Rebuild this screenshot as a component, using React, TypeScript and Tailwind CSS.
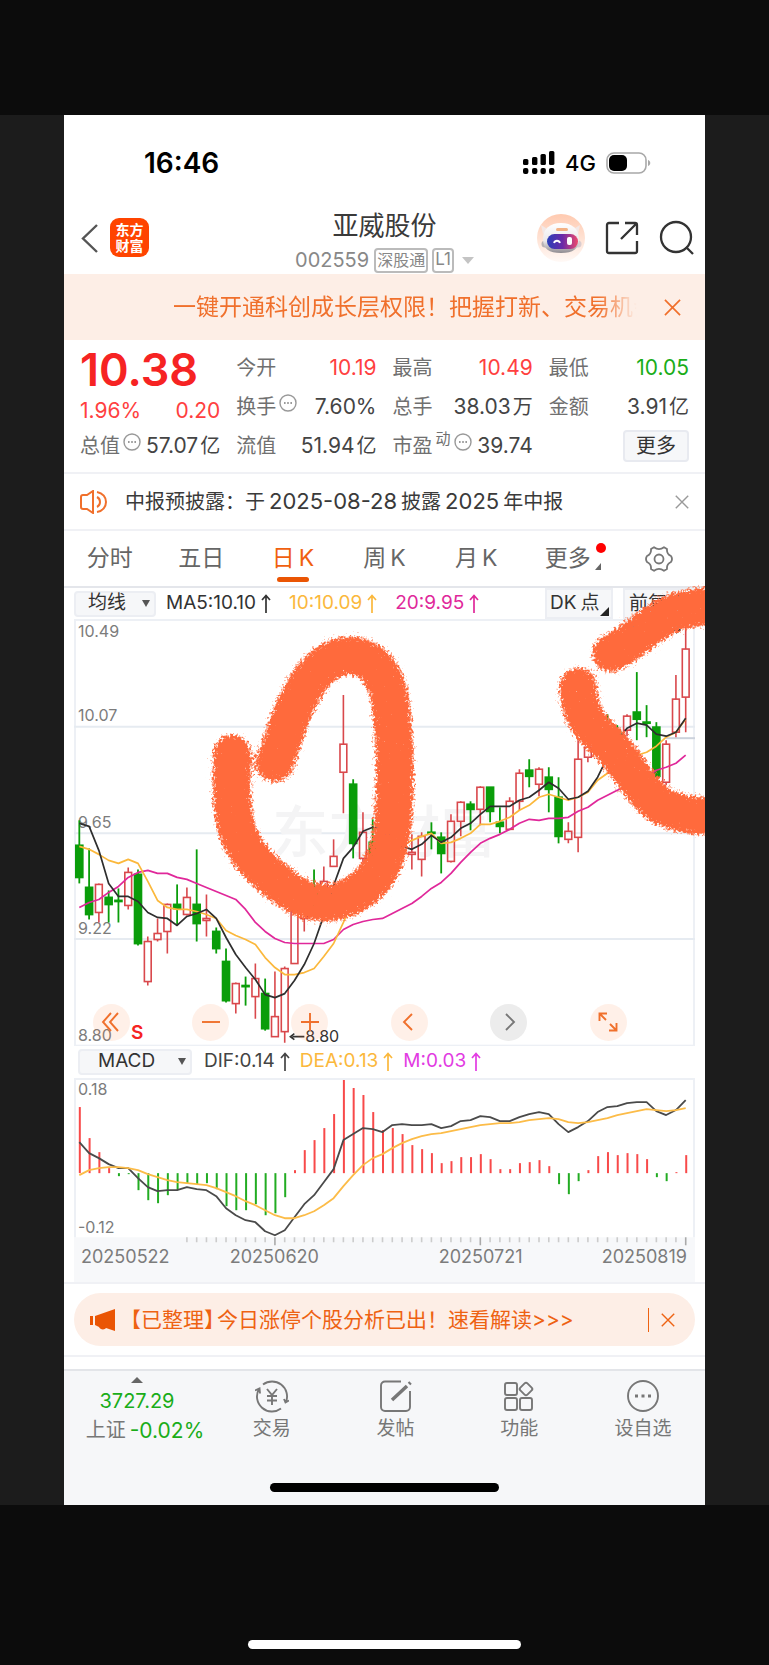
import type { ReactNode } from 'react'

type Kind = 'up' | 'down'
// [kind, high, body top, body bottom, low]
type Candle = [Kind, number, number, number, number]

const candles: Candle[] = [
  ['down', 820, 845, 877, 883], ['down', 848, 887, 914, 919], ['up', 883, 884, 912, 922],
  ['down', 890, 897, 904, 922], ['down', 888, 900, 901, 922], ['up', 867, 872, 905, 909],
  ['down', 869, 874, 943, 945], ['up', 936, 941, 981, 985], ['up', 918, 933, 939, 941],
  ['up', 903, 904, 931, 953], ['down', 884, 904, 908, 924], ['up', 887, 897, 914, 915],
  ['down', 849, 904, 923, 941], ['up', 894, 918, 920, 936], ['down', 927, 931, 948, 953],
  ['down', 948, 961, 1000, 1002], ['up', 982, 983, 1003, 1013], ['down', 976, 985, 986, 1005],
  ['up', 963, 978, 996, 1018], ['down', 978, 993, 1028, 1030], ['up', 971, 1016, 1036, 1036],
  ['up', 966, 968, 1031, 1042], ['up', 900, 910, 963, 963], ['up', 882, 900, 918, 931],
  ['down', 869, 886, 905, 912], ['up', 866, 881, 905, 910], ['up', 839, 856, 866, 866],
  ['up', 695, 744, 772, 813], ['down', 779, 784, 843, 858], ['up', 812, 832, 858, 862],
  ['down', 819, 842, 856, 866], ['up', 815, 825, 845, 850], ['up', 820, 830, 850, 855],
  ['down', 835, 845, 846, 848], ['up', 834, 852, 854, 869], ['up', 832, 836, 859, 876],
  ['down', 822, 832, 833, 849], ['down', 832, 837, 853, 873], ['up', 814, 821, 861, 862],
  ['up', 801, 802, 821, 836], ['down', 801, 804, 809, 830], ['up', 786, 787, 809, 825],
  ['down', 787, 787, 811, 822], ['down', 807, 822, 826, 833], ['up', 797, 801, 829, 830],
  ['up', 769, 773, 801, 810], ['down', 759, 770, 776, 787], ['up', 767, 769, 784, 796],
  ['down', 767, 777, 789, 812], ['down', 777, 797, 836, 843], ['up', 822, 831, 839, 843],
  ['up', 740, 759, 837, 852], ['up', 738, 747, 757, 762], ['down', 725, 735, 750, 755],
  ['down', 714, 730, 740, 745], ['down', 725, 732, 738, 742], ['up', 714, 716, 730, 736],
  ['down', 672, 712, 719, 740], ['down', 705, 722, 723, 737], ['down', 722, 727, 776, 777],
  ['up', 740, 744, 782, 785], ['up', 675, 699, 732, 737], ['up', 622, 649, 697, 732],
]

const ma5 = [
  823, 826, 850, 883, 896, 896, 901, 912, 917, 918, 925, 916, 913, 909, 918, 937, 954, 967, 979, 994, 997,
  993, 980, 964, 943, 915, 885, 858, 847, 831, 827, 829, 838, 846, 849, 844, 835, 842, 837, 828, 823, 814,
  806, 806, 806, 800, 797, 790, 782, 788, 799, 797, 791, 777, 757, 740, 728, 723, 725, 734, 736, 732, 718,
]
const ma10 = [
  846, 849, 854, 860, 863, 859, 863, 881, 900, 907, 909, 909, 911, 914, 918, 930, 935, 939, 944, 957, 967,
  974, 974, 972, 968, 956, 943, 922, 900, 880, 862, 851, 847, 846, 840, 836, 833, 843, 842, 838, 833, 824,
  824, 821, 817, 810, 805, 797, 794, 797, 800, 797, 792, 780, 773, 765, 758, 755, 752, 746, 737, 732, 719,
]
const ma20 = [
  907, 902, 899, 892, 886, 877, 872, 870, 873, 873, 877, 879, 883, 887, 891, 895, 899, 909, 922, 931, 938,
  942, 943, 943, 943, 943, 939, 929, 924, 921, 919, 918, 913, 908, 903, 896, 888, 882, 873, 862, 852, 843,
  838, 834, 829, 823, 819, 820, 818, 818, 817, 811, 807, 800, 795, 790, 786, 782, 777, 770, 767, 763, 755,
]
const bars = [
  1106, 1137, 1151, 1167, 1175, 1173, 1189, 1199, 1202, 1194, 1189, 1182, 1183, 1182, 1188, 1205, 1209, 1209,
  1203, 1214, 1212, 1196, 1169, 1149, 1139, 1127, 1113, 1079, 1087, 1094, 1111, 1129, 1127, 1133, 1144, 1148,
  1152, 1162, 1160, 1156, 1156, 1153, 1158, 1168, 1168, 1162, 1161, 1159, 1165, 1183, 1193, 1180, 1169, 1155,
  1151, 1154, 1152, 1153, 1158, 1176, 1180, 1171, 1154,
]
const dif = [
  1141, 1152, 1157, 1163, 1167, 1167, 1177, 1186, 1190, 1189, 1189, 1186, 1188, 1189, 1195, 1207, 1214, 1219,
  1221, 1230, 1234, 1229, 1216, 1203, 1194, 1181, 1168, 1139, 1133, 1127, 1128, 1131, 1124, 1123, 1124, 1124,
  1123, 1127, 1125, 1120, 1119, 1115, 1116, 1120, 1120, 1116, 1113, 1111, 1113, 1123, 1131, 1126, 1120, 1111,
  1106, 1105, 1102, 1101, 1101, 1110, 1114, 1109, 1099,
]
const dea = [
  1174, 1169, 1167, 1166, 1166, 1167, 1169, 1173, 1176, 1179, 1181, 1182, 1183, 1184, 1187, 1191, 1195, 1200,
  1204, 1209, 1214, 1217, 1217, 1214, 1210, 1204, 1197, 1185, 1174, 1164, 1157, 1153, 1147, 1142, 1138, 1135,
  1133, 1132, 1130, 1128, 1126, 1124, 1123, 1122, 1122, 1121, 1119, 1118, 1117, 1118, 1121, 1122, 1121, 1119,
  1117, 1114, 1112, 1110, 1108, 1109, 1110, 1109, 1107,
]

const ZERO = 1172
const xAt = (i: number) => 79.3 + i * 9.765
const line = (ys: number[]) => ys.map((y, i) => `${xAt(i).toFixed(1)},${y}`).join(' ')

function Dots() {
  return (
    <svg viewBox="0 0 18 18" className="mb-2 size-[18px] shrink-0" fill="none" stroke="#999" strokeWidth="1.4">
      <circle cx="9" cy="9" r="8" />
      <path d="M5 9h1.6M8.2 9h1.6M11.4 9H13" strokeWidth="1.8" />
    </svg>
  )
}

function Cross({ className }: { className: string }) {
  return (
    <svg viewBox="0 0 18 18" className={className} fill="none" stroke="currentColor" strokeWidth="1.8">
      <path d="M1 1l16 16M17 1L1 17" />
    </svg>
  )
}

function Row({ label, value, unit, extra, tone }: { label: string; value: string; unit?: string; extra?: ReactNode; tone?: string }) {
  return (
    <div className="flex h-[39px] items-center justify-between whitespace-nowrap">
      <span className="flex items-center gap-[3px] text-[#707070]">
        {label}
        {extra}
      </span>
      <span className={`flex items-center gap-[2px] ${tone ?? 'text-[#444]'}`}>
        <span className="text-[21px]">{value}</span>
        {unit && <span>{unit}</span>}
      </span>
    </div>
  )
}

function StatusBar() {
  return (
    <div className="flex h-24 items-center justify-between pr-[54px] pl-20 text-black">
      <span className="text-[28px] font-semibold">16:46</span>
      <div className="flex items-center gap-[10px]">
        <svg viewBox="0 0 33 24" className="h-6 w-[33px]">
          <g fill="#000">
            <rect x="1" y="8" width="5.400" height="6" rx="1.500" />
            <rect x="10" y="6" width="5.400" height="8" rx="1.500" />
            <rect x="18.500" y="3" width="5.400" height="11" rx="1.500" />
            <rect x="27" y="0" width="5.400" height="14" rx="1.500" />
            <rect x="1" y="17" width="5.400" height="6" rx="2" />
            <rect x="10" y="17" width="5.400" height="6" rx="2" />
            <rect x="18.500" y="17" width="5.400" height="6" rx="2" />
            <rect x="27" y="17" width="5.400" height="6" rx="2" />
          </g>
        </svg>
        <span className="text-[22px] font-medium">4G</span>
        <svg viewBox="0 0 45 22" className="h-[22px] w-[45px]">
          <rect x="1" y="1" width="39" height="20" rx="7" fill="none" stroke="#a8a8a8" strokeWidth="1.6" />
          <rect x="3" y="3" width="18" height="16" rx="5" fill="#000" />
          <path d="M42 8c3 1 3 5 0 6z" fill="#a8a8a8" />
        </svg>
      </div>
    </div>
  )
}

function Robot() {
  return (
    <svg viewBox="0 0 48 48" className="size-12">
      <defs>
        <linearGradient id="halo" x2="0" y2="1">
          <stop offset="0" stopColor="#ffcab0" />
          <stop offset="1" stopColor="#fff9f6" />
        </linearGradient>
        <linearGradient id="visor">
          <stop offset="0" stopColor="#2b3fb8" />
          <stop offset=".5" stopColor="#6a2aa8" />
          <stop offset="1" stopColor="#ee4a6c" />
        </linearGradient>
        <linearGradient id="shell" x2="0" y2="1">
          <stop offset="0" stopColor="#ffffff" />
          <stop offset=".6" stopColor="#ebe8ea" />
          <stop offset="1" stopColor="#8f8b90" />
        </linearGradient>
      </defs>
      <circle cx="24" cy="24" r="24" fill="url(#halo)" />
      <path d="M4 11l8 5-6 4zM43 11l-8 5 6 4z" fill="#f3e8e6" />
      <circle cx="8" cy="30" r="3.500" fill="#b9b2b4" />
      <circle cx="41" cy="30" r="3.500" fill="#d9cdd0" />
      <path d="M24 9c11 0 18 6 18 16S36 39 24 39 6 35 6 25 13 9 24 9z" fill="url(#shell)" />
      <rect x="19" y="14" width="12" height="3" rx="1.5" fill="#f3b184" />
      <rect x="10" y="20" width="31" height="15" rx="7.5" fill="url(#visor)" />
      <path d="M17 29c1-3 5-3 6 0" fill="none" stroke="#fff" strokeWidth="1.8" />
      <rect x="30" y="23" width="5" height="8" rx="2" fill="#fff" />
    </svg>
  )
}

function Header() {
  return (
    <header className="grid h-[63px] grid-cols-[1fr_auto_1fr] items-start">
      <div className="flex items-center gap-3 pt-[7px] pl-4">
        <button aria-label="返回">
          <svg viewBox="0 0 18 30" className="h-[30px] w-[18px]" fill="none" stroke="#555" strokeWidth="2.4">
            <path d="M17 2L3 15.500 17 29" />
          </svg>
        </button>
        <div className="flex size-[39px] flex-col items-center justify-center rounded-[9px] bg-[#ff4400] text-[14px] leading-4 font-bold text-white">
          <span>东方</span>
          <span>财富</span>
        </div>
      </div>
      <div className="flex flex-col items-center">
        <h1 className="text-[26px] leading-[30px] text-[#3a3a3a]">亚威股份</h1>
        <div className="mt-1 flex items-center gap-1 text-[#888]">
          <span className="pr-px text-[20px]">002559</span>
          <span className="flex h-[25px] items-center rounded border-2 border-[#bbb] px-px text-[16px]">深股通</span>
          <span className="flex h-[25px] items-center rounded border-2 border-[#bbb] px-px text-[17px]">L1</span>
          <svg viewBox="0 0 12 7" className="ml-1 h-[7px] w-3" fill="#c4c4c4">
            <path d="M0 0h12L6 7z" />
          </svg>
        </div>
      </div>
      <div className="flex items-center justify-end gap-5 pt-[3px] pr-[10px]">
        <button aria-label="智能助手"><Robot /></button>
        <button aria-label="分享">
          <svg viewBox="0 0 34 34" className="size-[34px]" fill="none" stroke="#333" strokeWidth="2.3">
            <path d="M14 2H4a2 2 0 0 0-2 2v26a2 2 0 0 0 2 2h26a2 2 0 0 0 2-2V20M20 2h10a2 2 0 0 1 2 2v10M31 3L16 18" />
          </svg>
        </button>
        <button aria-label="搜索">
          <svg viewBox="0 0 36 36" className="size-9" fill="none" stroke="#333" strokeWidth="2.3">
            <circle cx="17" cy="17" r="15" />
            <path d="M27 27l7 7" />
          </svg>
        </button>
      </div>
    </header>
  )
}

function Quote() {
  return (
    <section className="grid grid-cols-4 gap-x-4 border-b-2 border-[#f0f1f5] px-4 pt-2 pb-[7px] text-[20px]">
      <div>
        <div className="flex h-11 items-center text-[45px] font-semibold text-[#f62323]">10.38</div>
        <div className="flex h-[34px] items-end justify-between text-[21px] text-[#ff4040]">
          <span>1.96%</span>
          <span>0.20</span>
        </div>
        <Row label="总值" extra={<Dots />} value="57.07" unit="亿" />
      </div>
      <div>
        <Row label="今开" tone="text-[#ff4040]" value="10.19" />
        <Row label="换手" extra={<Dots />} value="7.60%" />
        <Row label="流值" value="51.94" unit="亿" />
      </div>
      <div>
        <Row label="最高" tone="text-[#ff4040]" value="10.49" />
        <Row label="总手" value="38.03" unit="万" />
        <Row label="市盈" extra={<><span className="mb-3 text-[15px]">动</span><Dots /></>} value="39.74" />
      </div>
      <div>
        <Row label="最低" tone="text-[#1aad19]" value="10.05" />
        <Row label="金额" value="3.91" unit="亿" />
        <div className="flex h-[39px] items-center justify-end">
          <button className="h-8 w-[66px] rounded border-2 border-[#e8eaf0] bg-[#f6f7f9] leading-7 text-[#333]">更多</button>
        </div>
      </div>
    </section>
  )
}

function Notice() {
  return (
    <section className="flex h-[57px] items-center border-b-2 border-[#f0f1f5] px-4 text-[20px] text-[#3a3a3a]">
      <svg viewBox="0 0 28 24" className="mr-[17px] h-6 w-7 shrink-0" fill="none" stroke="#f0702c" strokeWidth="2">
        <path d="M3 5h4l6-4v22l-6-4H3a2 2 0 0 1-2-2V7a2 2 0 0 1 2-2zM17 7c4 2 4 8 0 10M17 2c12 2 12 18 0 20" />
      </svg>
      <p className="flex flex-1 items-center gap-1 whitespace-nowrap">
        <span>中报预披露：于</span>
        <span className="text-[22px]">2025-08-28</span>
        <span>披露</span>
        <span className="text-[22px]">2025</span>
        <span>年中报</span>
      </p>
      <button aria-label="关闭公告" className="text-[#999]"><Cross className="size-[14px]" /></button>
    </section>
  )
}

function Tabs() {
  const tab = 'flex h-full flex-1 items-center justify-center gap-1'
  return (
    <nav className="flex h-[57px] border-b-2 border-[#e4e6eb] text-[23px] text-[#666]">
      <button className={tab}>分时</button>
      <button className={tab}>五日</button>
      <button className="relative flex h-full flex-1 items-center justify-center gap-1 text-[#f0600f]">
        <span>日</span>
        <span>K</span>
        <span className="absolute bottom-1 h-[5px] w-8 rounded-full bg-[#ea5504]" />
      </button>
      <button className={tab}><span>周</span><span>K</span></button>
      <button className={tab}><span>月</span><span>K</span></button>
      <button className={tab}>
        <span className="relative">
          更多
          <svg viewBox="0 0 12 34" className="absolute top-0 left-full ml-1 h-[34px] w-3">
            <circle cx="6" cy="7" r="5" fill="#f00" />
            <path d="M6 22v7H0z" fill="#666" />
          </svg>
        </span>
      </button>
      <button aria-label="设置" className={tab}>
        <svg viewBox="0 0 28 26" className="h-[26px] w-7" fill="none" stroke="#777" strokeWidth="1.8" strokeLinejoin="round">
          <path d="M9 1.200Q14 5 19 1.200L22 3Q21.500 8 26 10Q28 13 26 16Q21.500 18 22 23L19 24.800Q14 21 9 24.800L6 23Q6.500 18 2 16Q0 13 2 10Q6.500 8 6 3Z" />
          <circle cx="14" cy="13" r="4.500" />
        </svg>
      </button>
    </nav>
  )
}

function Picker({ label, className }: { label: string; className: string }) {
  return (
    <button className={`flex h-[26px] items-center justify-between rounded-sm border-2 border-[#eceef3] bg-[#f6f7f9] text-[#333] ${className}`}>
      {label}
      <svg viewBox="0 0 8 7" className="h-[7px] w-2" fill="#555">
        <path d="M0 0h8L4 7z" />
      </svg>
    </button>
  )
}

function Indicator({ text, className }: { text: string; className: string }) {
  return (
    <span className={`flex items-center gap-[5px] ${className}`}>
      {text}
      <svg viewBox="0 0 10 19" className="h-[19px] w-[10px]" fill="none" stroke="currentColor" strokeWidth="1.7">
        <path d="M5 19V1.500M1 6l4-4.500L9 6" />
      </svg>
    </span>
  )
}

const circle = 'flex size-[37px] items-center justify-center rounded-full bg-[#fb6a20]/10'

function ChartButtons() {
  const icon = { viewBox: '0 0 20 20', className: 'size-5', fill: 'none', stroke: 'currentColor', strokeWidth: 1.9 }
  return (
    <div className="absolute right-[11%] bottom-[5px] left-[3%] flex justify-between text-[#f0702c]">
      <button aria-label="最早" className={circle}>
        <svg {...icon}><path d="M10 1L2 10l8 9M17 1L9 10l8 9" /></svg>
      </button>
      <button aria-label="缩小" className={circle}>
        <svg {...icon}><path d="M1 10h18" /></svg>
      </button>
      <button aria-label="放大" className={circle}>
        <svg {...icon}><path d="M1 10h18M10 1v18" /></svg>
      </button>
      <button aria-label="左移" className={circle}>
        <svg {...icon}><path d="M13 2L5 10l8 8" /></svg>
      </button>
      <button aria-label="右移" className="flex size-[37px] items-center justify-center rounded-full bg-[#ececec] text-[#777]">
        <svg {...icon}><path d="M7 2l8 8-8 8" /></svg>
      </button>
      <button aria-label="全屏" className={circle}>
        <svg {...icon}><path d="M1.500 9V1.500H9M2 2l6 6M18.500 11v7.500H11M18 18l-6-6" /></svg>
      </button>
    </div>
  )
}

function PriceChart() {
  return (
    <div className="relative">
      <svg viewBox="74 619 620 426" className="block h-auto w-full">
        <g fill="none" stroke="#edf0f5" strokeWidth="2">
          <rect x="75" y="620" width="618" height="425" />
          <path d="M74 726.500h620M74 833h620M74 938.500h620" stroke="#e6ebf1" />
          <path d="M665 738h29" stroke="#ccd2dc" />
        </g>
        <text x="384" y="852" textAnchor="middle" fontSize="56" fontWeight="500" fill="#f4f4f5">东方财富</text>
        <g fontSize="16" fill="#7c7c7c">
          <text x="78" y="637">10.49</text>
          <text x="78" y="721">10.07</text>
          <text x="78" y="828">9.65</text>
          <text x="78" y="934">9.22</text>
          <text x="78" y="1040">8.80</text>
          <text x="624" y="635">10.49</text>
        </g>
        {candles.map(([kind, high, top, bottom, low], i) => {
          const x = xAt(i)
          return kind === 'up' ? (
            <g key={i} stroke="#d9484c" strokeWidth="1.600" fill="none">
              <path d={`M${x} ${high}V${top}M${x} ${bottom}V${low}`} />
              <rect x={x - 3.4} y={top} width="6.800" height={bottom - top} />
            </g>
          ) : (
            <g key={i} stroke="#0a9d0a" strokeWidth="1.800" fill="#0a9d0a">
              <path d={`M${x} ${high}V${low}`} />
              <rect x={x - 3.4} y={top} width="6.800" height={bottom - top} />
            </g>
          )
        })}
        <g fill="none" strokeWidth="1.700" strokeLinejoin="round">
          <polyline points={line(ma20)} stroke="#e0289a" />
          <polyline points={line(ma10)} stroke="#fbb83c" />
          <polyline points={line(ma5)} stroke="#2e2e2e" />
        </g>
        <path d="M304 1036h-12M294 1033l-4 3 4 3M664 630h14M675 627l4 3-4 3" stroke="#333" strokeWidth="1.600" fill="none" />
        <text x="305" y="1041" fontSize="16" fill="#333">8.80</text>
        <text x="131" y="1038" fontSize="19" fontWeight="600" fill="#f62323">S</text>
      </svg>
      <ChartButtons />
    </div>
  )
}

function MacdChart() {
  return (
    <svg viewBox="74 1077 620 204" className="block h-auto w-full">
      <rect x="74" y="1236" width="620" height="45" fill="#f7f8fa" />
      <path d="M75 1236V1078H693V1236" fill="none" stroke="#edf0f5" strokeWidth="2" />
      <g fontSize="16" fill="#7c7c7c">
        <text x="78" y="1094">0.18</text>
        <text x="78" y="1232">-0.12</text>
      </g>
      {bars.map((y, i) => (
        <path key={i} d={`M${xAt(i) + 0.5} ${ZERO}V${y}`} stroke={y < ZERO ? '#f84a4a' : '#22ac22'} strokeWidth="2" />
      ))}
      <g fill="none" strokeWidth="1.800" strokeLinejoin="round">
        <polyline points={line(dif)} stroke="#4a4a4a" />
        <polyline points={line(dea)} stroke="#fcbc48" />
      </g>
      {bars.map((_, i) => i > 10 && (
        <path key={i} d={`M${xAt(i)} 1236v${i % 21 === 20 ? 8 : 5}`} stroke={i % 21 === 20 ? '#aaa' : '#ccc'} strokeWidth="1.600" />
      ))}
      <g fontSize="18" fill="#7c7c7c">
        <text x="81" y="1262">20250522</text>
        <text x="274" y="1262" textAnchor="middle">20250620</text>
        <text x="480" y="1262" textAnchor="middle">20250721</text>
        <text x="686" y="1262" textAnchor="end">20250819</text>
      </g>
    </svg>
  )
}

// hand drawn marks over the candles
function Marker() {
  return (
    <svg viewBox="64 588 641 457" className="pointer-events-none absolute inset-0 h-full w-full overflow-visible">
      <filter id="chalk" x="-10%" y="-15%" width="120%" height="130%" colorInterpolationFilters="sRGB">
        <feGaussianBlur in="SourceAlpha" stdDeviation="4.5" result="soft" />
        <feTurbulence type="fractalNoise" baseFrequency=".42" numOctaves="3" seed="4" />
        <feColorMatrix values="0 0 0 0 0  0 0 0 0 0  0 0 0 0 0  1 0 0 0 0" result="grain" />
        <feComposite in="soft" in2="grain" operator="arithmetic" k2="1" k3="1" k4="-.5" />
        <feComponentTransfer result="mask">
          <feFuncA type="linear" slope="3.5" intercept="-1.45" />
        </feComponentTransfer>
        <feFlood floodColor="#ff6a3c" />
        <feComposite in2="mask" operator="in" />
      </filter>
      <g fill="none" stroke="#ff6a3c" strokeWidth="39" strokeLinecap="round" strokeLinejoin="round" filter="url(#chalk)">
        <path d="M232 753C231 780 231 800 235 822C240 850 262 872 290 891C310 905 335 907 356 893C382 878 391 850 393 820C396 780 395 735 390 700C385 668 368 655 348 655C322 657 307 680 294 708C286 728 281 746 275 763" />
        <path d="M611 653C632 644 655 617 680 610L725 603" />
        <path d="M578 686C579 710 586 724 606 741C625 760 636 784 656 802C668 812 690 816 725 817" />
      </g>
    </svg>
  )
}

function Charts() {
  return (
    <section>
      <div className="relative">
        <div className="flex h-[31px] items-center pr-[6px] pl-[10px] text-[19px] whitespace-nowrap">
          <Picker label="均线" className="mr-[10px] w-[82px] pr-1 pl-3" />
          <div className="flex gap-[18px]">
            <Indicator text="MA5:10.10" className="text-[#333]" />
            <Indicator text="10:10.09" className="text-[#fbb83c]" />
            <Indicator text="20:9.95" className="text-[#e0289a]" />
          </div>
          <button className="relative ml-auto flex h-[31px] w-[68px] items-center gap-1 border-2 border-[#eceef3] bg-[#f6f7f9] pl-[3px] text-[#333]">
            <span>DK</span>
            <span>点</span>
            <svg viewBox="0 0 9 9" className="absolute right-[2px] bottom-px size-[9px]" fill="#222">
              <path d="M9 0v9H0z" />
            </svg>
          </button>
          <button className="ml-[10px] h-[31px] w-[76px] border-2 border-[#eceef3] bg-[#f6f7f9] pl-1 text-left leading-[27px] text-[#333]">前复权</button>
        </div>
        <div className="px-[10px]"><PriceChart /></div>
        <Marker />
      </div>
      <div className="flex h-8 items-center pl-[14px] text-[19px] whitespace-nowrap">
        <Picker label="MACD" className="mr-3 w-[114px] pr-1 pl-[18px]" />
        <div className="flex gap-[10px]">
          <Indicator text="DIF:0.14" className="text-[#444]" />
          <Indicator text="DEA:0.13" className="text-[#fbb83c]" />
          <Indicator text="M:0.03" className="text-[#e23be2]" />
        </div>
      </div>
      <div className="px-[10px]"><MacdChart /></div>
    </section>
  )
}

function Promo() {
  return (
    <section className="border-y-2 border-[#f0f1f5] px-[10px] py-[9px]">
      <div className="flex h-[53px] items-center rounded-full bg-[#fdeee6] pr-5 pl-4 text-[21px] text-[#ee6212]">
        <svg viewBox="0 0 26 22" className="mr-1 h-[22px] w-[26px] shrink-0" fill="#ea5504">
          <path d="M0 7h3v9H0zM5 7L25 0v22l-9-3c-1 2-6 2-7-1l-4-2z" />
        </svg>
        <a href="#" className="flex-1 whitespace-nowrap"><span className="-mr-2">【已整理】</span>今日涨停个股分析已出！速看解读&gt;&gt;&gt;</a>
        <span className="mr-3 h-6 w-px bg-[#ee6212]" />
        <button aria-label="关闭推广"><Cross className="size-[14px]" /></button>
      </div>
    </section>
  )
}

function NavItem({ label, children }: { label: string; children: ReactNode }) {
  return (
    <button className="flex flex-1 flex-col items-center gap-[6px] pt-2">
      <svg viewBox="0 0 34 34" className="size-[34px]" fill="none" stroke="#777" strokeWidth="1.900">
        {children}
      </svg>
      <span className="leading-5">{label}</span>
    </button>
  )
}

function BottomBar() {
  return (
    <footer className="mt-3 border-t-2 border-[#e3e5e9] bg-[#f6f7f9] pb-[13px]">
      <nav className="flex h-[112px] items-start text-[19px] text-[#777]">
        <button className="flex w-[146px] flex-col items-center pt-[6px] text-[20px] whitespace-nowrap">
          <svg viewBox="0 0 12 6" className="h-[6px] w-3" fill="#666">
            <path d="M6 0l6 6H0z" />
          </svg>
          <span className="mt-1 leading-[29px] text-[#1aad19]">3727.29</span>
          <span className="flex gap-1 pl-4 leading-[29px]">上证<span className="text-[21px] text-[#1aad19]">-0.02%</span></span>
        </button>
        <NavItem label="交易">
          <path d="M8 5.500A15 15 0 0 1 31 23M26 29.500A15 15 0 0 1 4 10M0 11.500l4.500-2 .5 5M34 21.500l-3.500 2-1.500-3.500" />
          <path d="M12 10l5 6 5-6M17 16v10M12 17h10M12 21.500h10" />
        </NavItem>
        <NavItem label="发帖">
          <path d="M22 2.500H6a4 4 0 0 0-4 4V28a4 4 0 0 0 4 4h21a4 4 0 0 0 4-4V12" />
          <path d="M13 21L28 7M30 5l1.500-1.500" strokeWidth="3.500" />
        </NavItem>
        <NavItem label="功能">
          <rect x="3" y="4" width="12" height="12" rx="2" />
          <rect x="3" y="19" width="12" height="12" rx="2" />
          <rect x="18" y="19" width="12" height="12" rx="2" />
          <rect x="19" y="5" width="10" height="10" rx="2" transform="rotate(45 24 10)" />
        </NavItem>
        <NavItem label="设自选">
          <circle cx="17" cy="17" r="15" />
          <path d="M9 17h3M15.500 17h3M22 17h3" strokeWidth="3" />
        </NavItem>
      </nav>
      <div className="mx-auto h-[9px] w-[229px] rounded-full bg-black" />
    </footer>
  )
}

export default function App() {
  return (
    <div className="flex min-h-screen flex-col bg-[#0c0c0c] pt-[115px] font-[Inter,'Noto_Sans_CJK_SC',sans-serif]">
      <div className="bg-[#1c1c1c] px-16">
        <main className="overflow-hidden bg-white">
          <StatusBar />
          <Header />
          <section className="flex h-[66px] items-center justify-between bg-[#fdeee6] pr-6 pl-[109px] text-[#f0702c]">
            <a href="#" className="mask-r-from-88% mask-r-to-96% text-[23px] whitespace-nowrap">
              一键开通科创成长层权限！把握打新、交易机会
            </a>
            <button aria-label="关闭横幅"><Cross className="size-[17px]" /></button>
          </section>
          <Quote />
          <Notice />
          <Tabs />
          <Charts />
          <Promo />
          <BottomBar />
        </main>
      </div>
      <div className="mx-auto mt-auto mb-4 h-[9px] w-[273px] rounded-full bg-white" />
    </div>
  )
}
